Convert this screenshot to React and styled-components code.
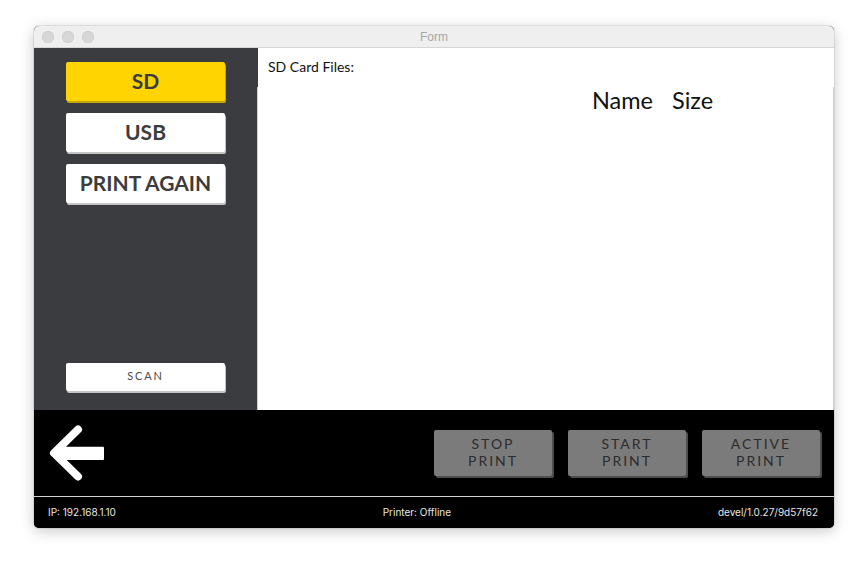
import React from "react";
import styled, { createGlobalStyle } from "styled-components";

const Global = createGlobalStyle`
  html, body { margin: 0; padding: 0; background: #ffffff; }
  body { font-family: Lato, "Open Sans", sans-serif; }
`;

const Page = styled.div`
  padding: 26px 34px;
`;

const Window = styled.div`
  width: 800px;
  border-radius: 5px;
  overflow: hidden;
  box-shadow: 0 3px 14px rgba(0, 0, 0, 0.22), 0 0 0 1px rgba(0, 0, 0, 0.08);
  background: #000;
`;

const TitleBar = styled.div`
  position: relative;
  height: 21px;
  background: #efefef;
  border-bottom: 1px solid #d6d6d6;
  display: flex;
  align-items: center;
  justify-content: center;
  font-family: "Liberation Sans", Arial, sans-serif;
  font-size: 12px;
  color: #a8a8a8;
`;

const Lights = styled.div`
  position: absolute;
  left: 8px;
  top: 5px;
  display: flex;
  gap: 8px;
`;

const Light = styled.span`
  width: 12px;
  height: 12px;
  border-radius: 50%;
  background: #d7d7d7;
  box-shadow: inset 0 0 0 0.5px #c6c6c6;
`;

const AppGrid = styled.div`
  display: grid;
  grid-template-rows: 362px 86px 1px 31px;
  height: 480px;
`;

const Main = styled.div`
  display: grid;
  grid-template-columns: 224px 576px;
  background: #fff;
`;

const Sidebar = styled.div`
  background: #3b3c40;
  display: flex;
  flex-direction: column;
  gap: 12px;
  padding: 14px 32px 19px 32px;
`;

const SideButton = styled.button`
  height: 39px;
  width: 159px;
  border: none;
  border-radius: 2px;
  background: ${(p) => (p.$active ? "#ffd400" : "#ffffff")};
  box-shadow: 1px 2px 0 ${(p) => (p.$active ? "#c9a700" : "#c4c4c4")};
  color: #3c3c3c;
  font-family: Lato, sans-serif;
  font-weight: 700;
  font-size: 21px;
  padding: 0 0 2px 0;
  cursor: pointer;
`;

const ScanButton = styled.button`
  margin-top: auto;
  height: 28px;
  width: 159px;
  border: none;
  border-radius: 2px;
  background: #ffffff;
  box-shadow: 1px 2px 0 #c4c4c4;
  color: #4a4a4a;
  font-family: Lato, sans-serif;
  font-size: 11px;
  letter-spacing: 1.8px;
  padding: 0 0 3px 0;
`;

const Panel = styled.div`
  display: flex;
  flex-direction: column;
  background: #fff;
`;

const PanelHeader = styled.div`
  height: 37px;
  display: flex;
  align-items: center;
  padding: 0 0 2px 10px;
  font-family: Lato, sans-serif;
  font-size: 14px;
  color: #111;
`;

const FileList = styled.div`
  flex: 1;
  border-left: 1px solid #cfcfcf;
  border-right: 1px solid #cfcfcf;
  margin-left: -1px;
`;

const ListHeader = styled.div`
  display: flex;
  gap: 19px;
  padding: 0 0 0 334px;
  font-family: Lato, sans-serif;
  font-size: 23.5px;
  color: #111;
  line-height: 26px;
`;

const BottomBar = styled.div`
  background: #000;
  display: flex;
  align-items: center;
  padding: 0 14px 0 14px;
  gap: 16px;
`;

const BackButton = styled.div`
  width: 56px;
  height: 56px;
  margin-right: auto;
  display: flex;
`;

const ActionButton = styled.button`
  width: 118px;
  height: 46px;
  border: none;
  border-radius: 2px;
  background: #7b7b7b;
  box-shadow: 2px 2px 0 #4e4e4e;
  color: #2c2c2c;
  font-family: Lato, sans-serif;
  font-size: 14px;
  line-height: 17px;
  letter-spacing: 2px;
  padding: 0 0 2px 0;
  display: flex;
  flex-direction: column;
  align-items: center;
  justify-content: center;
`;

const Divider = styled.div`
  background: #cfcfcf;
`;

const StatusBar = styled.div`
  background: #000;
  display: flex;
  justify-content: space-between;
  align-items: center;
  padding: 0 16px 2px 14px;
  font-family: Inter, "Liberation Sans", Arial, sans-serif;
  font-size: 10px;
  color: #e6e6e6;
`;

const ArrowIcon = () => (
  <svg width="56" height="56" viewBox="0 0 56 56">
    <rect x="8" y="21.7" width="48" height="13.3" rx="1" fill="#fff" />
    <polyline
      points="30,4.5 6,28 30,51.5"
      fill="none"
      stroke="#fff"
      strokeWidth="8"
      strokeLinecap="round"
      strokeLinejoin="round"
    />
  </svg>
);

export default function App() {
  return (
    <Page>
      <Global />
      <Window>
        <TitleBar>
          <Lights>
            <Light />
            <Light />
            <Light />
          </Lights>
          Form
        </TitleBar>
        <AppGrid>
          <Main>
            <Sidebar>
              <SideButton $active>SD</SideButton>
              <SideButton>USB</SideButton>
              <SideButton>PRINT AGAIN</SideButton>
              <ScanButton>SCAN</ScanButton>
            </Sidebar>
            <Panel>
              <PanelHeader>SD Card Files:</PanelHeader>
              <FileList>
                <ListHeader>
                  <span>Name</span>
                  <span>Size</span>
                </ListHeader>
              </FileList>
            </Panel>
          </Main>
          <BottomBar>
            <BackButton>
              <ArrowIcon />
            </BackButton>
            <ActionButton>
              <span>STOP</span>
              <span>PRINT</span>
            </ActionButton>
            <ActionButton>
              <span>START</span>
              <span>PRINT</span>
            </ActionButton>
            <ActionButton>
              <span>ACTIVE</span>
              <span>PRINT</span>
            </ActionButton>
          </BottomBar>
          <Divider />
          <StatusBar>
            <span>IP: 192.168.1.10</span>
            <span>Printer: Offline</span>
            <span>devel/1.0.27/9d57f62</span>
          </StatusBar>
        </AppGrid>
      </Window>
    </Page>
  );
}
